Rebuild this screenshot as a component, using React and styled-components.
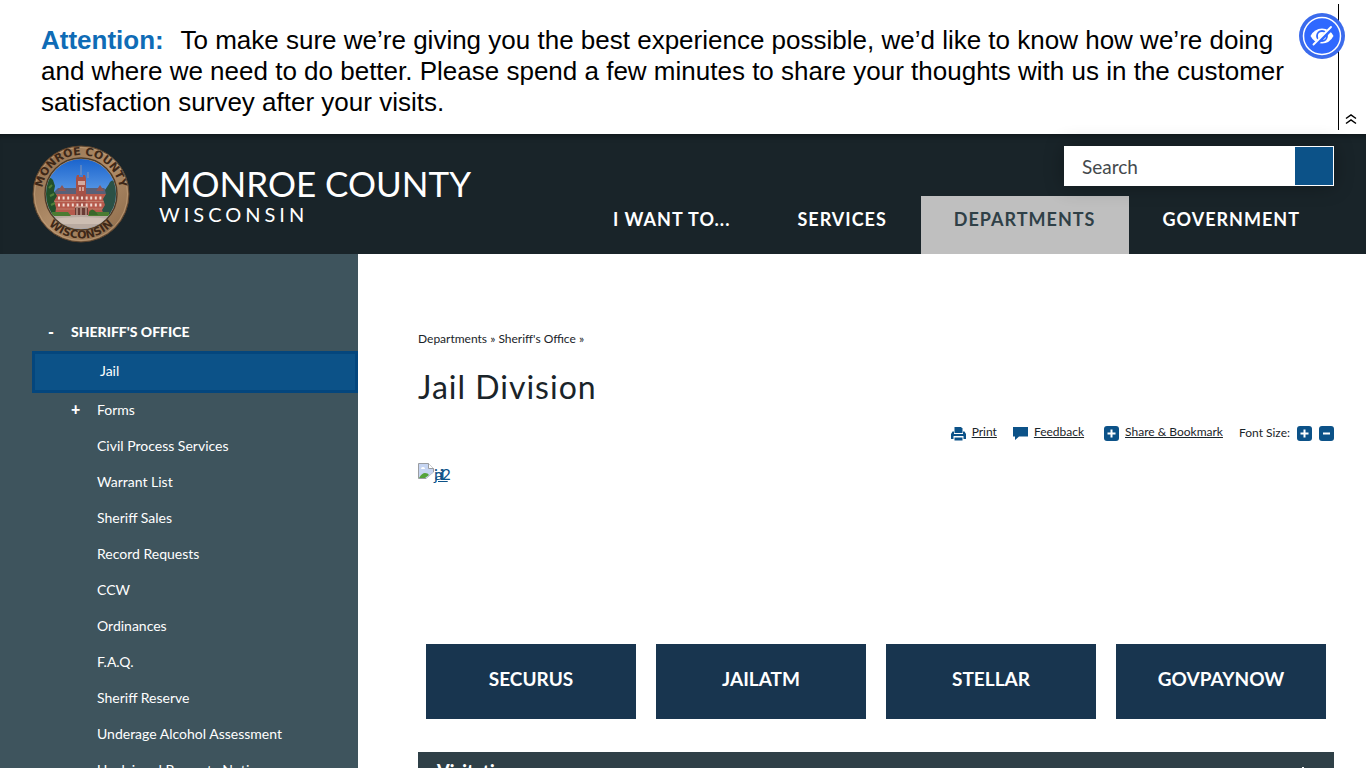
import { useState } from 'react';
import styled, { createGlobalStyle } from 'styled-components';

const GlobalStyle = createGlobalStyle`
	* {
		box-sizing: border-box;
	}

	body {
		margin: 0;
		color: #1a2429;
		background: #fff;
		font-family: Lato, sans-serif;
	}

	ul {
		margin: 0;
		padding: 0;
		list-style: none;
	}

	a {
		color: inherit;
	}
`;

const Page = styled.div`
	display: flex;
	flex-direction: column;
	height: 100vh;
	overflow: hidden;
`;

const Alert = styled.section`
	display: flex;
	flex-shrink: 0;
	padding: 4px 0;
`;

const AlertText = styled.p`
	flex: 1;
	margin: 0;
	padding: 21px 24px 12px 41px;
	border-right: 1px solid #000;
	color: #000;
	font-family: 'Liberation Sans', Arial, sans-serif;
	font-size: 26px;
	line-height: 31px;

	strong {
		margin-right: 10px;
		color: #0f6cb6;
	}
`;

const AlertToggle = styled.button`
	display: flex;
	align-items: flex-end;
	justify-content: center;
	width: 27px;
	padding: 0 3px 5px 0;
	border: 0;
	background: none;
`;

const AccessibilityButton = styled.button`
	position: fixed;
	top: 13px;
	right: 21px;
	width: 46px;
	height: 46px;
	padding: 0;
	border: 0;
	border-radius: 50%;
	background: none;

	svg {
		display: block;
	}
`;

const Header = styled.header`
	display: flex;
	flex-shrink: 0;
	justify-content: space-between;
	padding: 0 32px;
	color: #fff;
	background: #192429;
	box-shadow: inset 0 6px 6px -5px rgba(0, 0, 0, 0.5);
`;

const Brand = styled.a`
	display: flex;
	align-items: center;
	gap: 29px;
	text-decoration: none;
`;

const BrandName = styled.div`
	padding-top: 3px;
	font-size: 35px;
	line-height: 37px;
`;

const BrandState = styled.div`
	font-size: 20px;
	line-height: 24px;
	letter-spacing: 4px;
`;

const HeaderRight = styled.div`
	display: flex;
	flex-direction: column;
	align-items: flex-end;
	padding-top: 12px;
`;

const SearchForm = styled.form`
	z-index: 1;
	display: flex;
	width: 270px;
	height: 40px;
	margin-bottom: 10px;
	padding: 1px;
	background: #fff;
	box-shadow: 0 0 20px rgba(0, 0, 0, 0.3);

	input {
		flex: 1;
		min-width: 0;
		padding: 0 17px;
		border: 0;
		background: none;
		font: 19px Lato, sans-serif;
	}

	input::placeholder {
		color: #44494c;
		opacity: 1;
	}

	button {
		width: 38px;
		border: 0;
		background: #0c5288;
	}
`;

const Nav = styled.nav`
	display: flex;
`;

const NavLink = styled.a`
	padding: 11px 34px 23px 33px;
	color: ${({ $active }) => ($active ? '#2f4047' : '#fff')};
	background: ${({ $active }) => ($active ? '#bfbfbf' : 'none')};
	font-size: 18px;
	font-weight: bold;
	line-height: 24px;
	letter-spacing: 1px;
	text-decoration: none;
	text-transform: uppercase;
`;

const Body = styled.div`
	display: flex;
	flex: 1;
	min-height: 0;
`;

const Sidebar = styled.aside`
	flex: 0 0 358px;
	padding: 60px 0 0 32px;
	color: #fff;
	background: #3e545d;
	font-size: 14px;
	line-height: 36px;

	a {
		text-decoration: none;
	}
`;

const SideHeading = styled.div`
	display: flex;
	height: 37px;
	font-weight: 900;
`;

const Toggle = styled.button`
	width: ${({ $width }) => $width};
	padding: 0 0 3px ${({ $indent }) => $indent};
	border: 0;
	color: inherit;
	background: none;
	font: 900 16px Lato, sans-serif;
	text-align: left;
`;

const SideItem = styled.li`
	display: flex;
	padding-left: ${({ $sub }) => ($sub ? '39px' : '65px')};
`;

const ActiveItem = styled.li`
	margin-bottom: -1px;
	padding: 0 0 2px 65px;
	border: 3px solid #04467d;
	background: #0c5288;
	line-height: 34px;
`;

const Main = styled.main`
	flex: 1;
	min-width: 0;
	padding: 76px 32px 0 60px;
`;

const Breadcrumbs = styled.div`
	font-size: 12px;
	line-height: 18px;

	a {
		text-decoration: none;
	}
`;

const Title = styled.h1`
	margin: 19px 0 15px;
	font-size: 32px;
	font-weight: 400;
	line-height: 40px;
	letter-spacing: 1px;
`;

const Tools = styled.div`
	display: flex;
	align-items: center;
	justify-content: flex-end;
	gap: 16px;
	font-size: 12px;
	line-height: 18px;
`;

const Tool = styled.a`
	display: flex;
	align-items: center;
	gap: 6px;
	margin-left: ${({ $spaced }) => ($spaced ? '4px' : '0')};

	svg {
		position: relative;
		top: 1px;
	}
`;

const FontSize = styled.div`
	display: flex;
	align-items: center;
	gap: 7px;
	padding-top: 2px;

	button {
		height: 15px;
		padding: 0;
		border: 0;
		background: none;
	}

	svg {
		display: block;
	}
`;

const Photo = styled.a`
	display: flex;
	align-items: flex-start;
	height: 160px;
	margin: 21px 0;
	color: #0c5288;
	font-size: 16px;
	line-height: 22px;
	letter-spacing: -3px;
`;

const LinkGrid = styled.div`
	display: grid;
	grid-template-columns: repeat(4, 1fr);
	gap: 20px;
	padding: 0 8px;
`;

const BlockLink = styled.a`
	padding: 23px 0 28px;
	color: #fff;
	background: #18354f;
	font-size: 19px;
	font-weight: bold;
	line-height: 24px;
	text-align: center;
	text-decoration: none;
`;

const Accordion = styled.button`
	display: flex;
	align-items: center;
	justify-content: space-between;
	width: 100%;
	height: 44px;
	margin-top: 33px;
	padding: 0 25px 6px 19px;
	border: 0;
	color: #fff;
	background: #2f4047;
	font: 900 18px Lato, sans-serif;
`;

const navItems = ['I want to...', 'Services', 'Departments', 'Government'];

const sideItems = [
	'Civil Process Services',
	'Warrant List',
	'Sheriff Sales',
	'Record Requests',
	'CCW',
	'Ordinances',
	'F.A.Q.',
	'Sheriff Reserve',
	'Underage Alcohol Assessment',
	'Unclaimed Property Notice',
];

const blockLinks = ['SECURUS', 'JAILATM', 'STELLAR', 'GOVPAYNOW'];

const Seal = () => (
	<svg width="98" height="98" viewBox="0 0 98 98" aria-hidden="true">
		<defs>
			<linearGradient id="ring" x1="0" y1="0" x2="1" y2="1">
				<stop offset="0" stopColor="#8f6c4b" />
				<stop offset="0.5" stopColor="#b08d69" />
				<stop offset="1" stopColor="#8a6847" />
			</linearGradient>
			<linearGradient id="sky" x1="0" y1="0" x2="0" y2="1">
				<stop offset="0" stopColor="#1862cc" />
				<stop offset="0.5" stopColor="#5b9ae6" />
			</linearGradient>
			<clipPath id="scene"><circle cx="49" cy="49" r="35" /></clipPath>
			<path id="topArc" d="M10 49A39 39 0 0 1 88 49" />
			<path id="bottomArc" d="M4.500 49A44.500 44.500 0 0 0 93.500 49" />
		</defs>
		<circle cx="49" cy="49" r="48" fill="url(#ring)" stroke="#5e452e" strokeWidth="1" />
		<circle cx="49" cy="49" r="46.500" fill="none" stroke="#c8a680" strokeWidth="0.6" />
		<circle cx="49" cy="49" r="36" fill="#c49c6e" stroke="#4b3a29" strokeWidth="1.4" />
		<g clipPath="url(#scene)">
			<rect x="13" y="13" width="72" height="72" fill="url(#sky)" />
			<path d="M13 70h72v16H13z" fill="#b9aaa0" />
			<path d="M13 75q36-6 72 0v4H13z" fill="#cdbeb2" />
			<path d="M49 20v10M56 27v6" stroke="#9c9eae" strokeWidth="0.8" />
			<path d="M23 46l3-3h46l3 3v4H23z" fill="#596078" />
			<path d="M22 49h54v21H22z" fill="#b65a4c" />
			<path d="M44 33l1-3h2v2h4v-2h2l1 3v37H44z" fill="#a55147" />
			<path d="M46 36h7v4h-7z" fill="#d4a9a0" />
			<path d="M30 40l4 6h-8zM68 40l4 6h-8z" fill="#8d5554" />
			<path d="M26 53h46M26 60h46" stroke="#f0d8cf" strokeWidth="3" strokeDasharray="2 2.600" />
			<path d="M22 56.500h54M22 64h54" stroke="#c78b77" strokeWidth="0.7" />
			<path d="M48 42v4M51 42v4" stroke="#e8c6bc" strokeWidth="1.400" />
			<path d="M43 62h13v8H43z" fill="#683b34" />
			<path d="M43 62h13M45 63v7M49 63v7M54 63v7" stroke="#dfc1ae" strokeWidth="1" />
			<path d="M13 36q4-6 8-1l2 6-1 5 3 5-3 5 2 7-1 7H13z" fill="#23512b" />
			<path d="M17 43l3-3M18 51l4-2M19 60l4-2" stroke="#51803a" strokeWidth="2" />
			<path d="M85 37q-6-4-8 2l-4 6 1 4-3 5 2 6-3 5 2 5h13z" fill="#2b5146" />
			<path d="M20 67h16l3 4H20zM58 67h19v4H56z" fill="#4b7b32" />
			<path d="M57 67q3-5 7 0l2 3h-9z" fill="#39672b" />
		</g>
		<g fill="#3e2818" fontFamily="DejaVu Sans" fontWeight="bold" fontSize="11" textAnchor="middle">
			<text><textPath href="#topArc" startOffset="50%">MONROE COUNTY</textPath></text>
			<text><textPath href="#bottomArc" startOffset="50%">WISCONSIN</textPath></text>
		</g>
	</svg>
);

const EyeOff = () => (
	<svg width="46" height="46" viewBox="0 0 46 46" aria-hidden="true">
		<circle cx="23" cy="23" r="23" fill="#3b6bec" />
		<circle cx="23" cy="23" r="18.500" fill="#2f68ff" stroke="#fff" strokeWidth="1.500" />
		<path d="M11.500 23Q15.500 15.500 23 15.500Q30.500 15.500 34.500 23Q30.500 30.500 23 30.500Q15.500 30.500 11.500 23z" fill="#fff" />
		<circle cx="23" cy="23" r="5" fill="none" stroke="#2f68ff" strokeWidth="1.800" />
		<path d="M15.500 32.500L33.500 14.500" stroke="#2f68ff" strokeWidth="4" />
		<path d="M14.500 31.500L32 14" stroke="#fff" strokeWidth="1.900" strokeLinecap="round" />
	</svg>
);

const SquareIcon = ({ minus }) => (
	<svg width="15" height="15" viewBox="0 0 15 15" aria-hidden="true">
		<rect width="15" height="15" rx="3" fill="#0c5288" />
		<path d={minus ? 'M4 7.500h7' : 'M3.500 7.500h8M7.500 3.500v8'} stroke="#fff" strokeWidth="2" />
	</svg>
);

const PrintIcon = () => (
	<svg width="15" height="15" viewBox="0 0 15 15" fill="#0c5288" aria-hidden="true">
		<path d="M4 1h6l1.500 1.500V7H3.500V1z" />
		<path d="M1.500 5.500H3V8h9V5.500h1.500L15 8v5h-2.500v-3h-10v3H0V8z" />
		<path d="M3.500 11.500h8V14.500h-8z" />
	</svg>
);

const FeedbackIcon = () => (
	<svg width="15" height="15" viewBox="0 0 15 15" fill="#0c5288" aria-hidden="true">
		<path d="M0 1h15v9.500H6L2 14v-3.500H0z" />
	</svg>
);

const BrokenImage = () => (
	<svg width="16" height="16" viewBox="0 0 16 16" aria-hidden="true">
		<path d="M.5.500h10l5 5v4l-7 6H.5z" fill="#c6d5f2" stroke="#9a9da1" />
		<path d="M10.500.500v5h5" fill="#fff" stroke="#9a9da1" />
		<path d="M3 6a2 2 0 0 1 4 0z" fill="#fff" />
		<path d="M1 15q3-5 6-5 3 0 4 2l-4 3z" fill="#54a33a" />
		<path d="M8 16l8-7v3l-4 4z" fill="#fff" />
	</svg>
);

const App = () => {
	const [query, setQuery] = useState('');

	return (
		<Page>
			<GlobalStyle />
			<Alert>
				<AlertText>
					<strong>Attention:</strong> To make sure we’re giving you the best experience possible, we’d like to know how we’re doing and where we need to do better. Please spend a few minutes to share your thoughts with us in the customer satisfaction survey after your visits.
				</AlertText>
				<AlertToggle aria-label="Collapse alert">
					<svg width="12" height="12" viewBox="0 0 12 12" fill="none" stroke="#000" strokeWidth="1.500">
						<path d="M1 5.500l5-3.500 5 3.500M1 10.500l5-3.500 5 3.500" />
					</svg>
				</AlertToggle>
			</Alert>
			<AccessibilityButton aria-label="Accessibility">
				<EyeOff />
			</AccessibilityButton>

			<Header>
				<Brand href="#">
					<Seal />
					<div>
						<BrandName>MONROE COUNTY</BrandName>
						<BrandState>WISCONSIN</BrandState>
					</div>
				</Brand>
				<HeaderRight>
					<SearchForm>
						<input type="text" aria-label="Search" placeholder="Search" value={query} onChange={(e) => setQuery(e.target.value)} />
						<button aria-label="Submit search" />
					</SearchForm>
					<Nav>
						{navItems.map((item) => (
							<NavLink key={item} href="#" $active={item === 'Departments'}>{item}</NavLink>
						))}
					</Nav>
				</HeaderRight>
			</Header>

			<Body>
				<Sidebar>
					<SideHeading>
						<Toggle $width="39px" $indent="16px" aria-label="Collapse">-</Toggle>
						<a href="#">SHERIFF'S OFFICE</a>
					</SideHeading>
					<ul>
						<ActiveItem><a href="#">Jail</a></ActiveItem>
						<SideItem $sub>
							<Toggle $width="26px" $indent="0" aria-label="Expand">+</Toggle>
							<a href="#">Forms</a>
						</SideItem>
						{sideItems.map((item) => (
							<SideItem key={item}><a href="#">{item}</a></SideItem>
						))}
					</ul>
				</Sidebar>

				<Main>
					<Breadcrumbs>
						<a href="#">Departments</a> » <a href="#">Sheriff's Office</a> »
					</Breadcrumbs>
					<Title>Jail Division</Title>
					<Tools>
						<Tool href="#"><PrintIcon />Print</Tool>
						<Tool href="#"><FeedbackIcon />Feedback</Tool>
						<Tool href="#" $spaced><SquareIcon />Share & Bookmark</Tool>
						<FontSize>
							Font Size:
							<button aria-label="Increase font size"><SquareIcon /></button>
							<button aria-label="Decrease font size"><SquareIcon minus /></button>
						</FontSize>
					</Tools>
					<Photo href="#"><BrokenImage />jail2</Photo>
					<LinkGrid>
						{blockLinks.map((item) => (
							<BlockLink key={item} href="#">{item}</BlockLink>
						))}
					</LinkGrid>
					<Accordion>
						Visitation
						<svg width="12" height="12" viewBox="0 0 12 12" stroke="#fff" strokeWidth="2">
							<path d="M6 2v10M1 7h10" />
						</svg>
					</Accordion>
				</Main>
			</Body>
		</Page>
	);
};

export default App;
